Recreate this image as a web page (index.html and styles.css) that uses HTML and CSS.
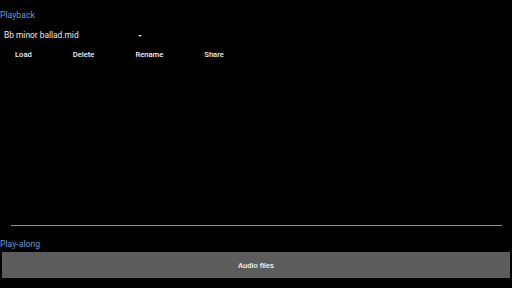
FILE: index.html
```html
<!DOCTYPE html>
<html lang="en">
<head>
<meta charset="utf-8">
<title>Playback</title>
<link rel="stylesheet" href="styles.css">
</head>
<body>
<div class="app">
  <section class="playback">
    <h2 class="section-title">Playback</h2>
    <div class="file-select">
      <span class="file-name">Bb minor ballad.mid</span>
      <span class="caret"></span>
    </div>
    <div class="actions">
      <button class="action">Load</button>
      <button class="action">Delete</button>
      <button class="action">Rename</button>
      <button class="action">Share</button>
    </div>
    <div class="spacer"></div>
    <div class="divider"></div>
  </section>
  <section class="playalong">
    <h2 class="section-title title-gap">Play-along</h2>
    <button class="audio-btn">Audio files</button>
  </section>
</div>
</body>
</html>
```
FILE: styles.css
```css
html, body {
  margin: 0;
  padding: 0;
  background: #000;
}
body {
  width: 512px;
  height: 288px;
  overflow: hidden;
  font-family: Roboto, "Noto Sans", sans-serif;
  color: #fff;
}
.app {
  box-sizing: border-box;
  height: 288px;
  padding: 9px 0 10px;
  display: flex;
  flex-direction: column;
}
.playback {
  flex: 1;
  display: flex;
  flex-direction: column;
}
.section-title {
  margin: 0;
  font-size: 8.7px;
  line-height: 12px;
  font-weight: 400;
  color: #5e9fd6;
}
.title-gap {
  margin-top: 12px;
}
.file-select {
  margin-top: 8px;
  width: 142px;
  box-sizing: border-box;
  padding-left: 4px;
  display: flex;
  align-items: center;
  justify-content: space-between;
  height: 12px;
}
.file-name {
  font-size: 8.4px;
  line-height: 12px;
  color: #ececec;
}
.caret {
  width: 0;
  height: 0;
  border-left: 2px solid transparent;
  border-right: 2px solid transparent;
  border-top: 2px solid #d0d0d0;
  margin-top: 1px;
}
.actions {
  margin-top: 8px;
  display: flex;
  gap: 11px;
}
.action {
  background: none;
  border: 0;
  margin: 0;
  padding: 0 15px;
  font-family: inherit;
  font-size: 7.6px;
  line-height: 12px;
  font-weight: 500;
  color: #f2f2f2;
}
.spacer {
  flex: 1;
}
.divider {
  height: 1px;
  margin: 0 10px 0 11px;
  background: #8c8c8c;
}
.playalong {
  display: flex;
  flex-direction: column;
}
.audio-btn {
  margin: 2px 2px 0;
  height: 26px;
  border: 0;
  padding: 0;
  background: #5c5c5c;
  font-family: inherit;
  font-size: 7.6px;
  font-weight: 500;
  color: #f5f5f5;
}
```
